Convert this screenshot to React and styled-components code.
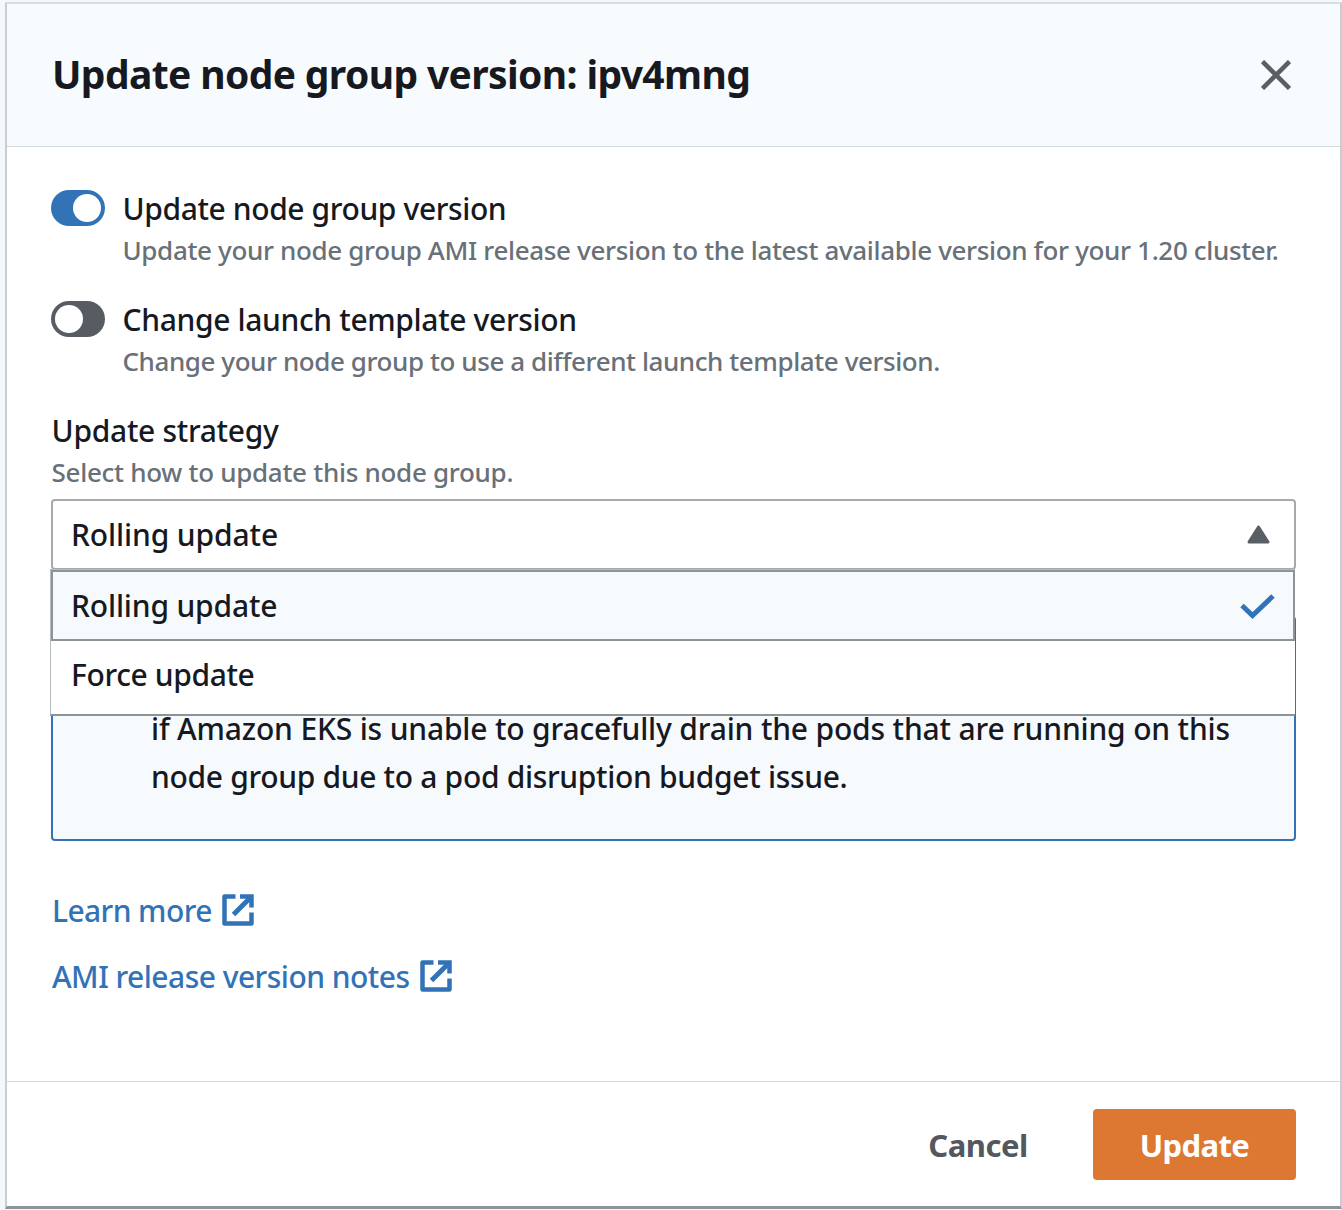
import React from 'react';
import styled, { createGlobalStyle } from 'styled-components';

const Global = createGlobalStyle`
  * { box-sizing: border-box; }
  body {
    margin: 0;
    background: #f3f8fb;
    color: #16191f;
    font-family: "Noto Sans", "Open Sans", sans-serif;
    font-size: 30px;
  }
`;

const Page = styled.div`
  width: 1342px;
  height: 1210px;
  padding: 2px 0 1px 5px;
  overflow: hidden;
`;

const Dialog = styled.section`
  height: 1207px;
  display: flex;
  flex-direction: column;
  background: #fff;
  border: 2px solid #c8cdd1;
  border-top-color: #d9dee2;
  border-bottom: 3px solid #8d9496;
`;

const Header = styled.header`
  height: 143px;
  flex: none;
  display: flex;
  align-items: center;
  justify-content: space-between;
  padding: 0 49px 0 45px;
  background: #f8fbfd;
  border-bottom: 1px solid #d3d9dd;
`;

const Text = styled.span`
  display: block;
  white-space: nowrap;
  letter-spacing: ${(p) => p.$track || 0}px;
`;

const Title = styled(Text).attrs({ as: 'h1' })`
  margin: 0 0 3px;
  font-size: 39px;
  line-height: 48px;
  font-weight: 700;
`;

const Label = styled(Text)`
  font-size: 30px;
  line-height: 44px;
  font-weight: 500;
`;

const Hint = styled(Text)`
  margin-top: -1px;
  font-size: 26px;
  line-height: 40px;
  font-weight: 500;
  color: #687078;
`;

const IconButton = styled.button`
  display: flex;
  padding: 0;
  border: 0;
  background: none;
`;

const Body = styled.main`
  flex: 1;
  padding: 40px 44px 0;
`;

const ToggleRow = styled.div`
  display: flex;
  gap: 17.5px;
  height: 111px;
`;

const Switch = styled.div`
  width: 54px;
  height: 36px;
  margin-top: 3px;
  padding: 4px;
  display: flex;
  justify-content: ${(p) => (p.$on ? 'flex-end' : 'flex-start')};
  border-radius: 18px;
  background: ${(p) => (p.$on ? '#3273b8' : '#575c62')};
`;

const Knob = styled.span`
  width: 28px;
  height: 28px;
  border-radius: 50%;
  background: #fff;
`;

const FieldHeading = styled.div`
  padding-left: 0.6px;
`;

const SelectWrap = styled.div`
  position: relative;
  margin-top: 7px;
`;

const SelectBox = styled.div`
  height: 71px;
  display: flex;
  align-items: center;
  justify-content: space-between;
  padding: 0 24px 0 18px;
  border: 2px solid #a5abad;
  border-radius: 4px;
`;

const Menu = styled.div`
  position: absolute;
  top: 70px;
  left: -1px;
  right: 1px;
  height: 147px;
  background: #fff;
  border: 1px solid #b5bcbf;
  border-right: 0;
  border-bottom: 2px solid #8d9496;
`;

const Option = styled.div`
  height: ${(p) => (p.$selected ? 71 : 67)}px;
  display: flex;
  align-items: center;
  justify-content: space-between;
  padding: 0 18px 0 ${(p) => (p.$selected ? 18 : 20)}px;
  background: ${(p) => (p.$selected ? '#f6fafd' : '#fff')};
  border: ${(p) => (p.$selected ? '2px solid #8d9496' : '0')};
`;

const CheckIcon = styled.svg`
  width: 35px;
  height: 25px;
  margin-top: 2px;
`;

const Alert = styled.div`
  height: 225px;
  margin-top: 46px;
  padding: 87px 60px 0 98px;
  background: #f6fafd;
  border: 2px solid #3273b8;
  border-radius: 4px;
`;

const AlertLine = styled(Label)`
  line-height: 48px;
`;

const Links = styled.nav`
  display: flex;
  flex-direction: column;
  gap: 22px;
  margin-top: 48px;
`;

const Link = styled.a`
  display: flex;
  align-items: center;
  gap: 10px;
  padding-left: 1px;
  color: #3273b8;
`;

const LinkIcon = styled.svg`
  width: 32px;
  height: 32px;
  margin-bottom: 3px;
`;

const Footer = styled.footer`
  height: 125px;
  flex: none;
  display: flex;
  align-items: flex-start;
  justify-content: flex-end;
  padding: 27px 44px 0;
  border-top: 1px solid #d3d9dd;
`;

const Button = styled.button`
  width: ${(p) => (p.$primary ? 203 : 230)}px;
  height: 71px;
  padding: 0;
  display: flex;
  align-items: center;
  justify-content: center;
  border: 0;
  border-radius: 4px;
  background: ${(p) => (p.$primary ? '#dd7833' : 'none')};
  color: ${(p) => (p.$primary ? '#fff' : '#53585f')};
  font-family: inherit;
`;

const ButtonText = styled(Text)`
  font-size: 31px;
  line-height: 44px;
  font-weight: 700;
`;

const External = () => (
  <LinkIcon viewBox="0 0 32 32" fill="none" stroke="currentColor" strokeWidth="4.500">
    <path d="M13.500 2.500H2.500V29.500H29.500V18.500" strokeLinejoin="round" />
    <path d="M18 2.500H29.500V13.500" />
    <path d="M29 3L11.500 20.500" strokeWidth="5" />
  </LinkIcon>
);

export default function App() {
  return (
    <Page>
      <Global />
      <Dialog>
        <Header>
          <Title $track={-0.62}>Update node group version: ipv4mng</Title>
          <IconButton aria-label="Close">
            <svg width="30" height="30" viewBox="0 0 30 30" stroke="#5a5f66" strokeWidth="4.500">
              <path d="M1.500 1.500L28.500 28.500M28.500 1.500L1.500 28.500" />
            </svg>
          </IconButton>
        </Header>
        <Body>
          <ToggleRow>
            <Switch $on><Knob /></Switch>
            <div>
              <Label $track={-0.39}>Update node group version</Label>
              <Hint $track={-0.345}>Update your node group AMI release version to the latest available version for your 1.20 cluster.</Hint>
            </div>
          </ToggleRow>
          <ToggleRow>
            <Switch><Knob /></Switch>
            <div>
              <Label $track={-0.35}>Change launch template version</Label>
              <Hint $track={-0.42}>Change your node group to use a different launch template version.</Hint>
            </div>
          </ToggleRow>
          <FieldHeading>
            <Label $track={-0.3}>Update strategy</Label>
            <Hint $track={-0.29}>Select how to update this node group.</Hint>
          </FieldHeading>
          <SelectWrap>
            <SelectBox>
              <Label $track={-0.12}>Rolling update</Label>
              <svg width="23" height="19" viewBox="0 0 23 19">
                <path d="M11.500 2L21 17H2Z" fill="#5a5f66" stroke="#5a5f66" strokeWidth="3" strokeLinejoin="round" />
              </svg>
            </SelectBox>
            <Menu>
              <Option $selected>
                <Label $track={-0.17}>Rolling update</Label>
                <CheckIcon viewBox="0 0 35 25" fill="none" stroke="#3273b8" strokeWidth="5">
                  <path d="M2 11.500L12.500 21.500L33 2" />
                </CheckIcon>
              </Option>
              <Option>
                <Label $track={-0.37}>Force update</Label>
              </Option>
            </Menu>
          </SelectWrap>
          <Alert>
            <AlertLine $track={-0.17}>if Amazon EKS is unable to gracefully drain the pods that are running on this</AlertLine>
            <AlertLine $track={-0.32}>node group due to a pod disruption budget issue.</AlertLine>
          </Alert>
          <Links>
            <Link><Label $track={-0.6}>Learn more</Label><External /></Link>
            <Link><Label $track={-0.53}>AMI release version notes</Label><External /></Link>
          </Links>
        </Body>
        <Footer>
          <Button><ButtonText $track={-0.5}>Cancel</ButtonText></Button>
          <Button $primary><ButtonText $track={-0.6}>Update</ButtonText></Button>
        </Footer>
      </Dialog>
    </Page>
  );
}
